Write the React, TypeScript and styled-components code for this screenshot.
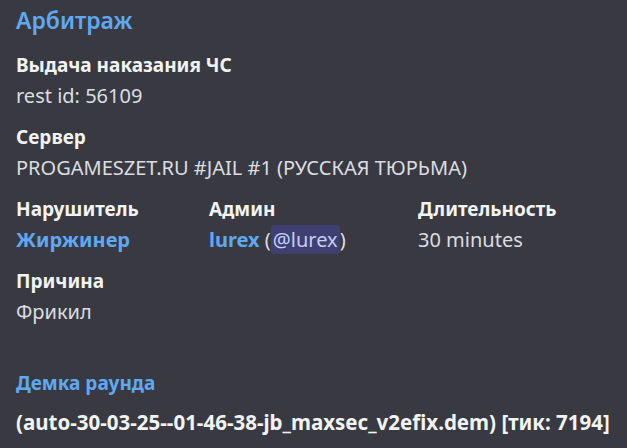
import styled, { createGlobalStyle } from 'styled-components';

const GlobalStyle = createGlobalStyle`
  html, body {
    margin: 0;
    padding: 0;
    background: #393a41;
  }
  body {
    font-family: 'Noto Sans', 'Open Sans', sans-serif;
  }
`;

const Embed = styled.div`
  width: 627px;
  height: 448px;
  box-sizing: border-box;
  padding: 6px 16px 0 16px;
  background: #393a41;
  display: flex;
  flex-direction: column;
  overflow: hidden;
`;

const Title = styled.div`
  font-size: 23px;
  line-height: 28px;
  font-weight: 600;
  color: #5fa9f4;
  margin-bottom: 19px;
`;

const Fields = styled.div`
  display: grid;
  grid-template-columns: 193px 209px 1fr;
  row-gap: 17px;
`;

const Field = styled.div<{ $inline?: boolean }>`
  grid-column: ${(p) => (p.$inline ? 'auto' : '1 / -1')};
  display: flex;
  flex-direction: column;
  gap: 7px;
`;

const Name = styled.div<{ $link?: boolean }>`
  font-size: 19px;
  line-height: 24px;
  font-weight: 700;
  color: ${(p) => (p.$link ? '#5fa9f4' : '#f2f3f5')};
  white-space: nowrap;
`;

const Value = styled.div<{ $strong?: boolean }>`
  font-size: ${(p) => (p.$strong ? '20.5px' : '20px')};
  line-height: 24px;
  font-weight: ${(p) => (p.$strong ? 700 : 400)};
  color: ${(p) => (p.$strong ? '#f2f3f5' : '#dbdee1')};
  white-space: nowrap;
`;

const UserLink = styled.span`
  color: #5fa9f4;
  font-weight: 700;
`;

const Mention = styled.span`
  background: #3d4070;
  color: #c9cdfb;
  border-radius: 3px;
  padding: 1px 2px;
`;

const Footer = styled.div`
  margin-top: 47px;
  display: flex;
  flex-direction: column;
  gap: 15px;
`;

const App = () => {
  return (
    <>
      <GlobalStyle />
      <Embed>
        <Title>Арбитраж</Title>
        <Fields>
          <Field>
            <Name>Выдача наказания ЧС</Name>
            <Value>rest id: 56109</Value>
          </Field>
          <Field>
            <Name>Сервер</Name>
            <Value>PROGAMESZET.RU #JAIL #1 (РУССКАЯ ТЮРЬМА)</Value>
          </Field>
          <Field $inline>
            <Name>Нарушитель</Name>
            <Value>
              <UserLink>Жиржинер</UserLink>
            </Value>
          </Field>
          <Field $inline>
            <Name>Админ</Name>
            <Value>
              <UserLink>lurex</UserLink> (<Mention>@lurex</Mention>)
            </Value>
          </Field>
          <Field $inline>
            <Name>Длительность</Name>
            <Value>30 minutes</Value>
          </Field>
          <Field>
            <Name>Причина</Name>
            <Value>Фрикил</Value>
          </Field>
        </Fields>
        <Footer>
          <Name $link>Демка раунда</Name>
          <Value $strong>
            (auto-30-03-25--01-46-38-jb_maxsec_v2efix.dem) [тик: 7194]
          </Value>
        </Footer>
      </Embed>
    </>
  );
};

export default App;
